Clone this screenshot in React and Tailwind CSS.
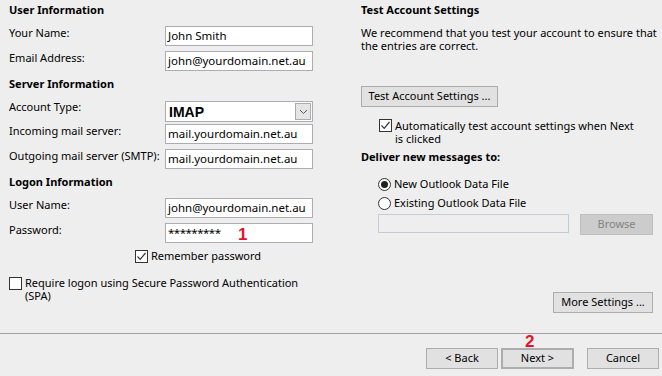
import React from "react";

const font = "font-['Noto_Sans','Open_Sans',sans-serif]";

function TextBox({ value, className = "" }) {
  return (
    <div className={`w-[148px] h-[20px] bg-white border border-[#abadb3] px-[2px] flex items-center text-[11.5px] leading-none whitespace-nowrap overflow-hidden ${className}`}>
      {value}
    </div>
  );
}

function Row({ label, children, className = "", labelShift = "-mt-[5px]" }) {
  return (
    <div className={`flex items-center ${className}`}>
      <div className={`w-[156px] whitespace-nowrap ${labelShift}`}>{label}</div>
      {children}
    </div>
  );
}

function Check({ checked }) {
  return (
    <div className="w-[13px] h-[13px] shrink-0 border border-[#333] bg-white flex items-center justify-center">
      {checked && (
        <svg width="11" height="11" viewBox="0 0 11 11">
          <path d="M1.5 5.5 L4.2 8.3 L9.5 2" fill="none" stroke="#333" strokeWidth="1.2" />
        </svg>
      )}
    </div>
  );
}

function Radio({ checked }) {
  return (
    <div className="w-[13px] h-[13px] shrink-0 rounded-full border border-[#333] bg-white flex items-center justify-center">
      {checked && <div className="w-[7px] h-[7px] rounded-full bg-[#222]" />}
    </div>
  );
}

function Button({ children, className = "" }) {
  return (
    <div className={`h-[21px] bg-[#e1e1e1] border border-[#adadad] flex items-center justify-center whitespace-nowrap ${className}`}>
      {children}
    </div>
  );
}

export default function App() {
  return (
    <div className={`relative w-[662px] h-[376px] bg-[#eeeeee] text-[11px] text-black overflow-hidden ${font}`}>
      <div className="flex h-[333px]">
        {/* left column */}
        <div className="w-[313px] pl-[9px] flex flex-col">
          <div className="h-[20px] flex items-center font-bold">User Information</div>
          <Row label="Your Name:" className="mt-[6px]"><TextBox value="John Smith" /></Row>
          <Row label="Email Address:" className="mt-[5px]"><TextBox value="john@yourdomain.net.au" /></Row>
          <div className="h-[20px] mt-[3px] flex items-center font-bold">Server Information</div>
          <Row label="Account Type:" className="mt-[7px]" labelShift="-mt-[8px]">
            <div className="w-[148px] h-[21px] bg-white border border-[#abadb3] flex items-center justify-between pl-[3px] pr-[1px]">
              <span className="font-['Liberation_Sans',Arial,sans-serif] font-bold text-[14px] leading-none">IMAP</span>
              <div className="w-[16px] h-[17px] bg-[#e5e5e5] border border-[#acacac] flex items-center justify-center">
                <svg width="9" height="6" viewBox="0 0 9 6">
                  <path d="M1 1 L4.5 4.5 L8 1" fill="none" stroke="#555" strokeWidth="1" />
                </svg>
              </div>
            </div>
          </Row>
          <Row label="Incoming mail server:" className="mt-[2px]"><TextBox value="mail.yourdomain.net.au" /></Row>
          <Row label="Outgoing mail server (SMTP):" className="mt-[5px]"><TextBox value="mail.yourdomain.net.au" /></Row>
          <div className="h-[20px] mt-[3px] flex items-center font-bold">Logon Information</div>
          <Row label="User Name:" className="mt-[6px]"><TextBox value="john@yourdomain.net.au" /></Row>
          <Row label="Password:" className="mt-[5px]"><TextBox value="*********" className="text-[10px] tracking-[-0.5px]" /></Row>
          <div className="mt-[7px] h-[13px] pl-[126px] flex items-center gap-[3px]">
            <Check checked />
            <span className="whitespace-nowrap">Remember password</span>
          </div>
          <div className="mt-[14px] flex items-start gap-[3px]">
            <Check />
            <span className="leading-[13px] -mt-[1px] w-[290px]">Require logon using Secure Password Authentication (SPA)</span>
          </div>
        </div>

        {/* right column */}
        <div className="ml-[48px] w-[293px] flex flex-col">
          <div className="h-[20px] flex items-center font-bold">Test Account Settings</div>
          <p className="mt-[6px] leading-[13px] w-[300px]">We recommend that you test your account to ensure that the entries are correct.</p>
          <Button className="mt-[34px] w-[137px] h-[19px]">Test Account Settings ...</Button>
          <div className="mt-[12px] pl-[18px] flex items-start gap-[3px]">
            <Check checked />
            <span className="leading-[13px] w-[240px]">Automatically test account settings when Next is clicked</span>
          </div>
          <div className="h-[20px] mt-[2px] flex items-center font-bold">Deliver new messages to:</div>
          <div className="mt-[10px] pl-[17px] h-[14px] flex items-center gap-[3px]">
            <Radio checked />
            <span className="whitespace-nowrap">New Outlook Data File</span>
          </div>
          <div className="mt-[5px] pl-[17px] h-[14px] flex items-center gap-[3px]">
            <Radio />
            <span className="whitespace-nowrap">Existing Outlook Data File</span>
          </div>
          <div className="mt-[4px] pl-[17px] flex items-start">
            <div className="w-[191px] h-[19px] border border-[#c3cbd6] bg-[#eeeeee]" />
            <div className="ml-[11px] w-[73px] h-[21px] bg-[#cccccc] border border-[#bfbfbf] flex items-center justify-center text-[#838383]">Browse</div>
          </div>
          <div className="mt-[57px] flex justify-end pr-[1px]">
            <Button className="w-[100px]">More Settings ...</Button>
          </div>
        </div>
      </div>

      <div className="h-px bg-[#a0a0a0]" />

      <div className="flex justify-end pr-[3px] mt-[14px]">
        <Button className="w-[72px]">&lt; Back</Button>
        <Button className="w-[73px] ml-[3px] border-2 border-[#0078d7]">Next &gt;</Button>
        <Button className="w-[72px] ml-[13px]">Cancel</Button>
      </div>

      {/* annotations */}
      <div className="absolute left-[238px] top-[222px] text-[#e8112d] font-bold text-[17px] font-['Liberation_Sans',Arial,sans-serif]">1</div>
      <div className="absolute left-[525px] top-[329px] text-[#e8112d] font-bold text-[17px] font-['Liberation_Sans',Arial,sans-serif]">2</div>
    </div>
  );
}
